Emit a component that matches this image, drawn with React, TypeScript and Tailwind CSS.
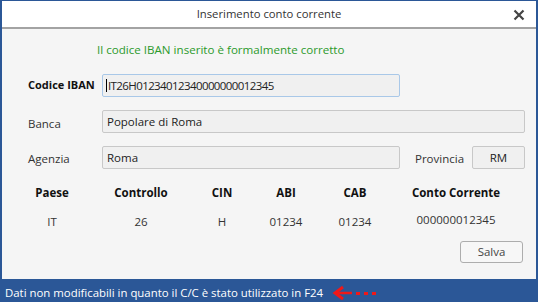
import React from "react";

const font = { fontFamily: '"Open Sans", "Noto Sans", "Liberation Sans", sans-serif' };

function Field({ value, className }: { value: string; className: string }) {
  return (
    <div className={`h-[23px] bg-[#f0f0f0] border border-[#c8c8c8] rounded-[2px] flex items-center pl-[4px] text-[11.5px] text-[#222] ${className}`}>
      {value}
    </div>
  );
}

export default function App() {
  const cols = [
    { w: "w-[88px]", h: "Paese", v: "IT" },
    { w: "w-[90px]", h: "Controllo", v: "26" },
    { w: "w-[72px]", h: "CIN", v: "H" },
    { w: "w-[56px]", h: "ABI", v: "01234" },
    { w: "w-[82px]", h: "CAB", v: "01234" },
    { w: "w-[120px]", h: "Conto Corrente", v: "000000012345" },
  ];
  return (
    <div className="w-[539px] h-[302px] bg-white pr-[1px]" style={font}>
      <div className="w-[538px] h-[302px] flex flex-col border-l-2 border-r-2 border-t border-[#2b5797]">
        <div className="h-[28px] shrink-0 bg-white border-b-2 border-[#a3a3a3] flex items-center justify-center relative">
          <span className="text-[11.3px] text-[#333]">Inserimento conto corrente</span>
          <svg className="absolute right-[11px] top-[8px]" width="12" height="12" viewBox="0 0 12 12">
            <path d="M1.5 1.5 L10.5 10.5 M10.5 1.5 L1.5 10.5" stroke="#444" strokeWidth="2.2" />
          </svg>
        </div>
        <div className="flex-1 bg-[#f5f5f5] flex flex-col text-[#333]">
          <div className="pl-[95px] pt-[13px] h-[30px] text-[11.6px] leading-[16px] text-[#2c9a2c]">
            Il codice IBAN inserito è formalmente corretto
          </div>
          <div className="flex items-center mt-[15px] h-[23px]">
            <span className="w-[100px] pl-[26px] text-[11px] font-bold text-[#111]">Codice IBAN</span>
            <div className="w-[298px] h-[23px] bg-[#f0f0f0] border border-[#a9c8e8] rounded-[2px] flex items-center pl-[3px] text-[11.5px] tracking-[-0.6px] text-[#222]">
              <span className="w-px h-[13px] bg-black mr-[1px]" />
              IT26H01234012340000000012345
            </div>
          </div>
          <div className="flex items-center mt-[13px] h-[23px]">
            <span className="w-[100px] pl-[26px] text-[11.5px] pt-[5px]">Banca</span>
            <Field value="Popolare di Roma" className="w-[423px]" />
          </div>
          <div className="flex items-center mt-[13px] h-[23px]">
            <span className="w-[100px] pl-[26px] text-[11.5px] pt-[3px]">Agenzia</span>
            <Field value="Roma" className="w-[298px]" />
            <span className="ml-[15px] w-[57px] text-[11.5px] pt-[2px]">Provincia</span>
            <div className="w-[53px] h-[23px] bg-[#f0f0f0] border border-[#c8c8c8] rounded-[2px] flex items-center justify-center text-[11.5px] text-[#222]">RM</div>
          </div>
          <div className="flex pl-[6px] mt-[16px]">
            {cols.map((c) => (
              <div key={c.h} className={`${c.w} flex flex-col items-center`}>
                <span className="text-[11.5px] font-bold text-[#111] leading-[16px]">{c.h}</span>
                <span className={`text-[11.5px] leading-[16px] ${c.h === "Conto Corrente" ? "mt-[11px]" : "mt-[13px]"}`}>{c.v}</span>
              </div>
            ))}
          </div>
          <div className="flex justify-end pr-[13px] mt-[11px]">
            <div className="w-[63px] h-[22px] border border-[#adadad] rounded-[3px] bg-[#f7f7f7] flex items-center justify-center text-[11.5px] text-[#444]">
              Salva
            </div>
          </div>
        </div>
        <div className="h-[23px] shrink-0 bg-[#2b5797] flex items-center pl-[3px] pt-[4px] text-white text-[11.4px]">
          <span>Dati non modificabili in quanto il C/C è stato utilizzato in F24</span>
          <svg className="ml-[9px]" width="46" height="16" viewBox="0 0 46 16">
            <path d="M11 2 L3 8 L11 14" stroke="#f01818" strokeWidth="3" fill="none" strokeLinejoin="miter" />
            <path d="M4 8 H20" stroke="#f01818" strokeWidth="2.5" />
            <rect x="24" y="7" width="4" height="3" fill="#f01818" />
            <rect x="32" y="7" width="4" height="3" fill="#f01818" />
            <rect x="40" y="7" width="4" height="3" fill="#f01818" />
          </svg>
        </div>
      </div>
    </div>
  );
}
